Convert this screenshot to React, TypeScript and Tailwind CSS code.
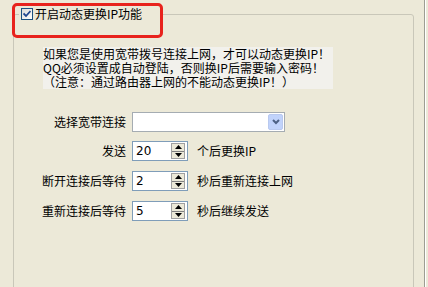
import React from 'react';

const cjk = { fontFamily: '"Noto Sans CJK SC", "Noto Sans", sans-serif' };

function SpinBox({ value }: { value: string }) {
  return (
    <div className="flex h-[20px] w-[56px] items-center border border-[#7f9db9] bg-white">
      <span className="flex-1 pl-[3px] text-[12px] leading-none text-black" style={{ fontFamily: 'Tahoma, "DejaVu Sans", sans-serif' }}>
        {value}
      </span>
      <div className="mr-[2px] flex h-[16px] w-[14px] flex-col border border-[#a0a0a0] bg-[#ece9d8]">
        <div className="flex flex-1 items-center justify-center border-b border-[#808080]">
          <svg width="7" height="4" viewBox="0 0 7 4">
            <path d="M3.5 0 L7 4 L0 4 Z" fill="#000" />
          </svg>
        </div>
        <div className="flex flex-1 items-center justify-center">
          <svg width="7" height="4" viewBox="0 0 7 4">
            <path d="M0 0 L7 0 L3.5 4 Z" fill="#000" />
          </svg>
        </div>
      </div>
    </div>
  );
}

function Row({ label, children }: { label: string; children: React.ReactNode }) {
  return (
    <div className="flex h-[20px] items-center">
      <span className="w-[112px] text-right text-[12px] leading-none text-black">{label}</span>
      <div className="ml-[6px] flex items-center">{children}</div>
    </div>
  );
}

export default function App() {
  return (
    <div className="relative flex h-[287px] w-[428px] overflow-hidden bg-[#ece9d8]" style={cjk}>
      {/* group box */}
      <div className="relative ml-[13px] mt-[14px] h-[300px] w-[401px] rounded-[3px] border border-[#c9c7b9]">
        <div className="absolute -top-[8px] left-[5px] flex h-[14px] w-[142px] items-center bg-[#ece9d8] pl-[2px]">
          <div className="flex h-[12px] w-[12px] items-center justify-center border border-[#1c5180] bg-gradient-to-br from-[#dcdcd7] to-white">
            <svg width="8" height="8" viewBox="0 0 8 8">
              <path d="M0.5 3.5 L3 6 L7.5 1" stroke="#21478f" strokeWidth="1.8" fill="none" />
            </svg>
          </div>
          <span className="ml-[2px] text-[12px] leading-none text-black">开启动态更换IP功能</span>
        </div>

        <div className="ml-[29px] mt-[32px] h-[42px] w-[290px] bg-[#f2f1ec] text-[12px] leading-[14px] text-black">
          <div>如果您是使用宽带拨号连接上网，才可以动态更换IP！</div>
          <div>QQ必须设置成自动登陆，否则换IP后需要输入密码！</div>
          <div>（注意：通过路由器上网的不能动态更换IP！）</div>
        </div>

        <div className="mt-[23px] flex flex-col">
          <Row label="选择宽带连接">
            <div className="flex h-[20px] w-[153px] items-center justify-end border border-[#a5acb2] bg-white pr-[1px]">
              <div className="flex h-[16px] w-[15px] items-center justify-center rounded-[2px] border border-[#b9c9ef] bg-[#c1d3fb]">
                <svg width="8" height="6" viewBox="0 0 8 6">
                  <path d="M1 1 L4 4 L7 1" stroke="#4d6185" strokeWidth="2" fill="none" />
                </svg>
              </div>
            </div>
          </Row>
          <div className="mt-[9px]">
            <Row label="发送">
              <SpinBox value="20" />
              <span className="ml-[9px] text-[12px] leading-none">个后更换IP</span>
            </Row>
          </div>
          <div className="mt-[10px]">
            <Row label="断开连接后等待">
              <SpinBox value="2" />
              <span className="ml-[9px] text-[12px] leading-none">秒后重新连接上网</span>
            </Row>
          </div>
          <div className="mt-[10px]">
            <Row label="重新连接后等待">
              <SpinBox value="5" />
              <span className="ml-[9px] text-[12px] leading-none">秒后继续发送</span>
            </Row>
          </div>
        </div>
      </div>

      <div className="ml-[10px] h-full w-[1px] bg-[#9d9d92]" />
      <div className="h-full w-[1px] bg-white" />

      {/* red annotation */}
      <div className="absolute left-[12px] top-[3px] h-[35px] w-[151px] rounded-[5px] border-[3px] border-[#e8231d]" />
    </div>
  );
}
